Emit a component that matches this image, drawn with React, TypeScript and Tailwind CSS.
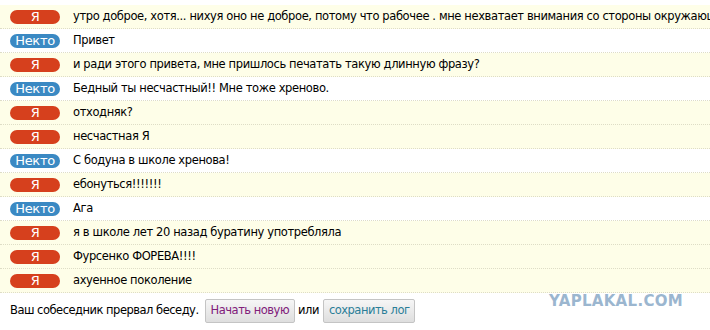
import React from "react";

type Msg = { me: boolean; text: string };

const msgs: Msg[] = [
  { me: true, text: "утро доброе, хотя... нихуя оно не доброе, потому что рабочее . мне нехватает внимания со стороны окружающих" },
  { me: false, text: "Привет" },
  { me: true, text: "и ради этого привета, мне пришлось печатать такую длинную фразу?" },
  { me: false, text: "Бедный ты несчастный!! Мне тоже хреново." },
  { me: true, text: "отходняк?" },
  { me: true, text: "несчастная Я" },
  { me: false, text: "С бодуна в школе хренова!" },
  { me: true, text: "ебонуться!!!!!!!" },
  { me: false, text: "Ага" },
  { me: true, text: "я в школе лет 20 назад буратину употребляла" },
  { me: true, text: "Фурсенко ФОРЕВА!!!!" },
  { me: true, text: "ахуенное поколение" },
];

export default function App() {
  return (
    <div
      className="w-[710px] h-[330px] bg-white overflow-hidden relative text-[11.5px] text-black"
      style={{ fontFamily: "Tahoma, 'DejaVu Sans', sans-serif" }}
    >
      <div className="pt-[5px]">
        {msgs.map((m, i) => (
          <div
            key={i}
            className={`h-[24px] flex items-center border-b border-dotted border-[#deddc6] whitespace-nowrap overflow-hidden ${
              m.me ? "bg-[#fefee8]" : "bg-white"
            }`}
          >
            <div
              className={`ml-[10px] w-[50px] h-[14px] shrink-0 rounded-full flex items-center justify-center text-white text-[13px] leading-none tracking-[-0.3px] ${
                m.me ? "bg-[#d6401d]" : "bg-[#3a89c3]"
              }`}
            >
              {m.me ? "Я" : "Некто"}
            </div>
            <span className="ml-[13px] tracking-[-0.38px]">{m.text}</span>
          </div>
        ))}
      </div>
      <div className="flex items-center pl-[10px] pt-[6px] tracking-[-0.5px]">
        <span>Ваш собеседник прервал беседу.</span>
        <button className="ml-[6px] h-[24px] px-[5px] border border-[#c4c4c4] rounded-[2px] bg-gradient-to-b from-[#f6f6f6] to-[#dedede] text-[#80207a] tracking-[-0.5px]">
          Начать новую
        </button>
        <span className="ml-[3px]">или</span>
        <button className="ml-[4px] h-[24px] px-[5px] border border-[#c4c4c4] rounded-[2px] bg-gradient-to-b from-[#f6f6f6] to-[#dedede] text-[#2a7e98] tracking-[-0.5px]">
          сохранить лог
        </button>
      </div>
      <div
        className="absolute left-[549px] top-[290px] text-[15px] font-black text-[#9bb6cf] tracking-[0.3px]"
        style={{ fontFamily: "'DejaVu Sans', sans-serif" }}
      >
        YAPLAKAL.COM
      </div>
    </div>
  );
}
